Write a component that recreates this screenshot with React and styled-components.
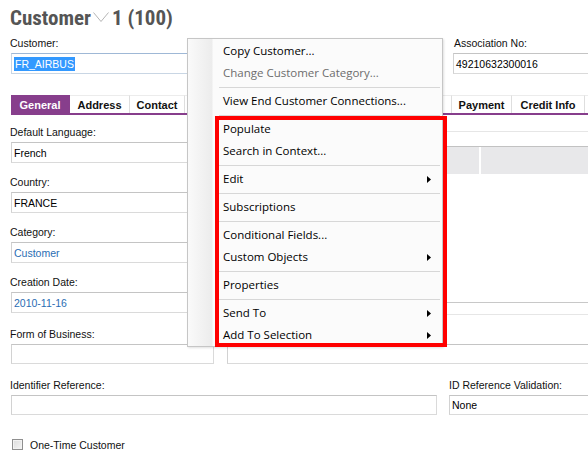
import React from "react";
import styled, { createGlobalStyle } from "styled-components";

const Global = createGlobalStyle`
  html, body { margin: 0; padding: 0; background: #fff; overflow: hidden; }
  body { font-family: "Liberation Sans", Arial, sans-serif; }
  #root { width: 588px; height: 454px; overflow: hidden; position: relative; }
`;

const PURPLE = "#873e8c";

const Page = styled.div`
  position: relative;
  width: 640px;
  height: 454px;
  padding-left: 11px;
  box-sizing: border-box;
  color: #000;
  font-size: 10.5px;
`;

const TitleBar = styled.h1`
  margin: 0;
  height: 37px;
  box-sizing: border-box;
  padding-top: 5px;
  display: flex;
  align-items: flex-start;
  margin-left: -1px;
  font-family: "Liberation Sans Narrow", "Roboto Condensed", "DejaVu Sans Condensed", sans-serif;
  font-stretch: condensed;
  font-weight: 700;
  font-size: 21px;
  line-height: 26px;
  color: #555;
`;

const Chevron = styled.svg`
  width: 16px;
  height: 12px;
  margin: 7px 3px 0 2px;
  flex: none;
`;

const TwoCol = styled.div`
  display: grid;
  grid-template-columns: ${(p) => p.$cols};
  column-gap: ${(p) => p.$gap || 16}px;
  margin-top: ${(p) => p.$mt || 0}px;
`;

const Field = styled.div`
  display: flex;
  flex-direction: column;
`;

const Label = styled.div`
  height: 13px;
  line-height: 13px;
  font-size: 10.5px;
  white-space: nowrap;
  margin-left: ${(p) => (p.$indent != null ? p.$indent : -1)}px;
  color: #111;
`;

const Input = styled.div`
  box-sizing: border-box;
  height: ${(p) => p.$h || 21}px;
  margin-top: 3px;
  border: 1px solid #dadada;
  border-top-color: #c4c4c4;
  border-left-color: #d2d2d2;
  background: #fff;
  padding: 0 2px;
  display: flex;
  align-items: center;
  font-size: 10.5px;
  white-space: nowrap;
  color: ${(p) => (p.$blue ? "#2a6db3" : "#000")};
  ${(p) => (p.$focus ? "border-color: #c9d6e4; border-top-color: #9fb8d6;" : "")}
`;

const Selected = styled.span`
  background: #3399ff;
  color: #fff;
  padding: 1px 1px;
`;

const TabStrip = styled.div`
  display: flex;
  height: 18px;
  margin-top: 21px;
  border-bottom: 2px solid ${PURPLE};
`;

const Tab = styled.div`
  flex: none;
  width: ${(p) => p.$w}px;
  height: 18px;
  box-sizing: border-box;
  display: flex;
  align-items: center;
  justify-content: center;
  font-weight: 700;
  font-size: 11px;
  white-space: nowrap;
  background: ${(p) => (p.$active ? PURPLE : "#fff")};
  color: ${(p) => (p.$active ? "#fff" : "#111")};
  border-top: 1px solid ${(p) => (p.$active ? PURPLE : "#ececec")};
  border-right: 1px solid ${(p) => (p.$active ? PURPLE : "#dedede")};
`;

const Body = styled.div`
  display: flex;
  align-items: flex-start;
  height: 187px;
  margin-top: 11px;
`;

const FieldColumn = styled.div`
  width: 426px;
  flex: none;
  display: flex;
  flex-direction: column;
  gap: 13px;
`;

const SideColumn = styled.div`
  flex: 1;
  margin-left: 10px;
  margin-top: 5px;
`;

const GridPanel = styled.div`
  height: 172px;
  border-top: 1px solid #e6e6e6;
  border-bottom: 1px solid #c8c8c8;
  box-sizing: border-box;
  padding-top: 14px;
`;

const GridHeader = styled.div`
  height: 27px;
  border-top: 1px solid #c2c2c2;
  background: #e8e8ea;
  display: grid;
  grid-template-columns: 32px 2px 1fr;
`;

const HeaderDivider = styled.div`
  grid-column: 2;
  background: #fff;
`;

const GridFoot = styled.div`
  height: 11px;
  border-bottom: 1px solid #e6e6e6;
`;

const CheckRow = styled.label`
  display: flex;
  align-items: center;
  height: 13px;
  margin-top: 23px;
  gap: 7px;
  font-size: 10.5px;
  color: #111;
`;

const CheckBox = styled.span`
  width: 11px;
  height: 11px;
  box-sizing: border-box;
  margin-left: 1px;
  border: 1px solid #8f8f8f;
  background: linear-gradient(135deg, #dcdcdc, #f4f4f4);
  box-shadow: inset 0 0 0 1px #f2f2f2;
`;

const Menu = styled.div`
  position: absolute;
  left: 187px;
  top: 38px;
  width: 256px;
  box-sizing: border-box;
  padding: 1px 0 0 0;
  border: 1px solid #c6c6c6;
  background: linear-gradient(90deg, #fafafa 0px, #ececec 24px, #fbfbfb 25px, #fbfbfb 100%);
  box-shadow: 1px 1px 2px rgba(0, 0, 0, 0.12);
  font-family: "Open Sans", "Noto Sans", sans-serif;
  font-size: 11.5px;
  z-index: 5;
`;

const Item = styled.div`
  height: 22px;
  line-height: 22px;
  padding: 0 11px 0 35px;
  display: flex;
  align-items: center;
  justify-content: space-between;
  white-space: nowrap;
  color: ${(p) => (p.$disabled ? "#6d6d6d" : "#000")};
`;

const Sep = styled.div`
  height: 1px;
  margin: 3px 2px 2px 31px;
  background: #d7d7d7;
`;

const Arrow = styled.svg`
  width: 4px;
  height: 7px;
  flex: none;
`;

const Highlight = styled.div`
  position: absolute;
  left: 215px;
  top: 116px;
  width: 232px;
  height: 231px;
  box-sizing: border-box;
  border: 4px solid #ff0000;
  z-index: 6;
  pointer-events: none;
`;

const menuItems = [
  { t: "Copy Customer..." },
  { t: "Change Customer Category...", disabled: true },
  { sep: true },
  { t: "View End Customer Connections..." },
  { sep: true },
  { t: "Populate" },
  { t: "Search in Context..." },
  { sep: true },
  { t: "Edit", sub: true },
  { sep: true },
  { t: "Subscriptions" },
  { sep: true },
  { t: "Conditional Fields..." },
  { t: "Custom Objects", sub: true },
  { sep: true },
  { t: "Properties" },
  { sep: true },
  { t: "Send To", sub: true },
  { t: "Add To Selection", sub: true },
];

const tabs = [
  { t: "General", w: 59, active: true },
  { t: "Address", w: 60 },
  { t: "Contact", w: 55 },
  { t: "", w: 267 },
  { t: "Payment", w: 60 },
  { t: "Credit Info", w: 73 },
  { t: "", w: 60 },
];

const leftFields = [
  { label: "Default Language:", value: "French" },
  { label: "Country:", value: "FRANCE" },
  { label: "Category:", value: "Customer", blue: true },
  { label: "Creation Date:", value: "2010-11-16", blue: true },
];

export default function App() {
  return (
    <>
      <Global />
      <Page>
        <TitleBar>
          <span>Customer</span>
          <Chevron viewBox="0 0 16 12">
            <polyline points="0.5,0.5 8,9.5 15.5,0.5" fill="none" stroke="#b5b5b5" strokeWidth="1" />
          </Chevron>
          <span>1 (100)</span>
        </TitleBar>

        <TwoCol $cols="426px 1fr" $gap={16}>
          <Field>
            <Label>Customer:</Label>
            <Input $focus>
              <Selected>FR_AIRBUS</Selected>
            </Input>
          </Field>
          <Field>
            <Label $indent={1}>Association No:</Label>
            <Input>49210632300016</Input>
          </Field>
        </TwoCol>

        <TabStrip>
          {tabs.map((tab, i) => (
            <Tab key={i} $w={tab.w} $active={tab.active}>
              {tab.t}
            </Tab>
          ))}
        </TabStrip>

        <Body>
          <FieldColumn>
            {leftFields.map((f) => (
              <Field key={f.label}>
                <Label>{f.label}</Label>
                <Input $blue={f.blue}>{f.value}</Input>
              </Field>
            ))}
          </FieldColumn>
          <SideColumn>
            <GridPanel>
              <GridHeader>
                <HeaderDivider />
              </GridHeader>
            </GridPanel>
            <GridFoot />
          </SideColumn>
        </Body>

        <TwoCol $cols="203px 1fr" $gap={13} $mt={15}>
          <Field>
            <Label>Form of Business:</Label>
            <Input $h={20} />
          </Field>
          <Field>
            <Label />
            <Input $h={20} />
          </Field>
        </TwoCol>

        <TwoCol $cols="426px 1fr" $gap={12} $mt={15}>
          <Field>
            <Label>Identifier Reference:</Label>
            <Input $h={20} />
          </Field>
          <Field>
            <Label $indent={0}>ID Reference Validation:</Label>
            <Input $h={20}>None</Input>
          </Field>
        </TwoCol>

        <CheckRow>
          <CheckBox />
          <span>One-Time Customer</span>
        </CheckRow>

        <Menu>
          {menuItems.map((m, i) =>
            m.sep ? (
              <Sep key={i} />
            ) : (
              <Item key={i} $disabled={m.disabled}>
                <span>{m.t}</span>
                {m.sub && (
                  <Arrow viewBox="0 0 4 7">
                    <polygon points="0,0 4,3.5 0,7" fill="#000" />
                  </Arrow>
                )}
              </Item>
            )
          )}
        </Menu>
        <Highlight />
      </Page>
    </>
  );
}
